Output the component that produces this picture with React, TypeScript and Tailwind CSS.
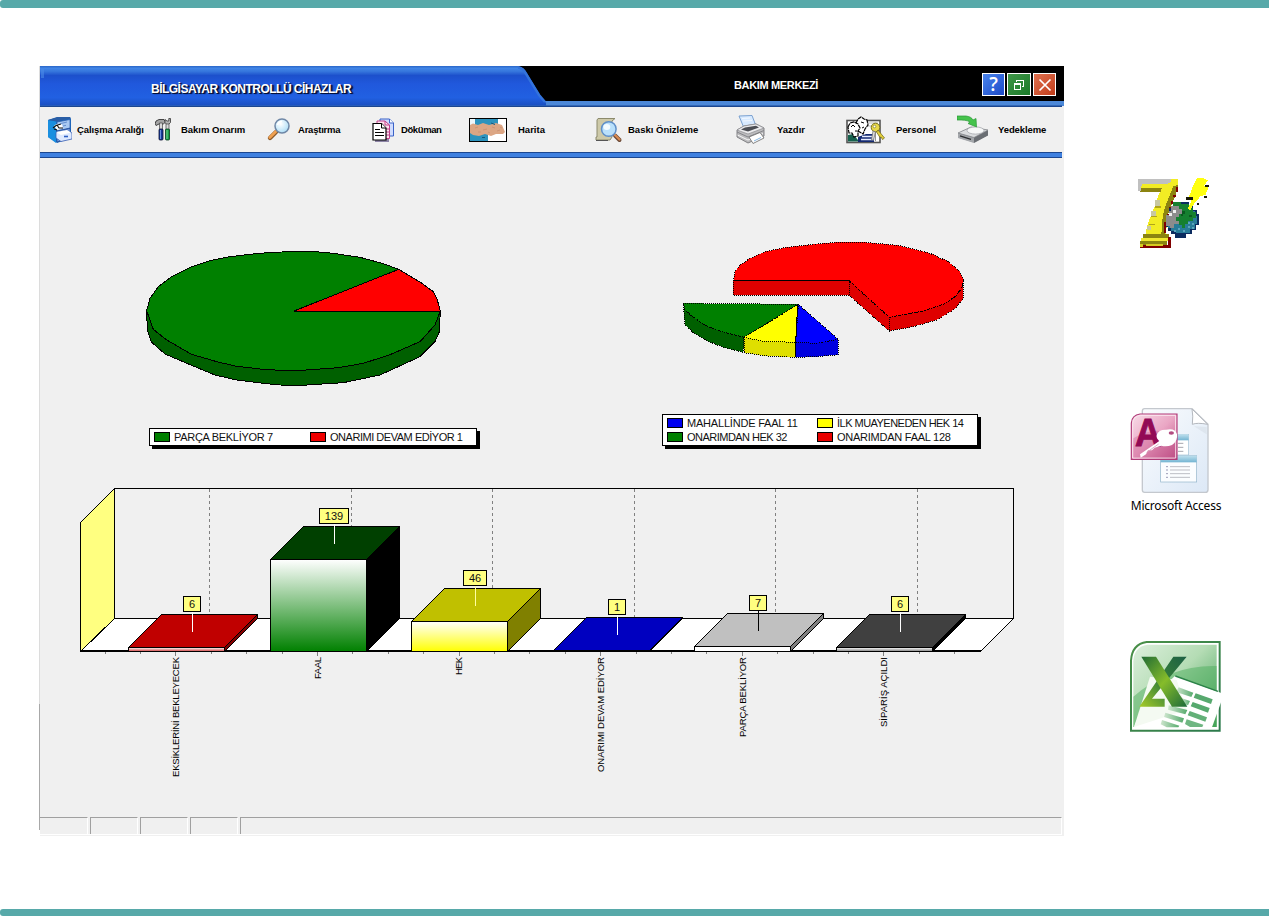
import React from "react";

const UI_FONT = "font-['Liberation_Sans',Arial,sans-serif]";

/* ---------- toolbar icons ---------- */

const CabinetIcon = () => (
  <svg className="block h-7 w-6" viewBox="0 0 24 28">
    <path d="M0 4 L9 1.5 H22 L23 3 V22 L9 27 L0 21 Z" fill="#1c6ec4" />
    <path d="M0 4 L8 5.500 V27 L0 21 Z" fill="#1a8fe0" />
    <path d="M0 4 L9 1 H22 L23 2.500 L9 5.500 Z" fill="#2a5ea6" />
    <path d="M9 6 L22 3.500 V12 L9 15 Z" fill="#a9c9f2" stroke="#2456a6" strokeWidth=".7" />
    <path d="M13 7.500 L19 6 M15 10 L18 9.300" stroke="#5b86c8" strokeWidth=".9" />
    <path d="M9 15 L22 12.500 V22 L9 26 Z" fill="#7fa9e6" stroke="#1d3f8c" strokeWidth=".7" />
    <path d="M8 16.500 L19 14 L24 17 V23 L13 25.500 L8 22 Z" fill="#dfeaff" stroke="#3a5fb4" strokeWidth=".8" />
    <path d="M8 16 L19 14 L23 16.500 L13 19 Z" fill="#fff" />
    <path d="M6 10 C8 8 11 7 14 8.500 L15 12 L9 14 Z" fill="#fff" />
    <path d="M5 12 L8 9.500 L13 8 M9 9 L11 12 L15 12 M6 13 L9 14" fill="none" stroke="#111" strokeWidth="1.100" />
    <path d="M16 20.500 H20" stroke="#2d5fc4" strokeWidth="1.600" />
  </svg>
);

const ToolsIcon = () => (
  <svg className="block h-6 w-[17px]" viewBox="0 0 17 24">
    <path d="M0 6 L1 3 L4 1.500 H9 L10.500 4 L8 6.500 L5 5.500 L1 7.500 Z" fill="#a4a4a4" stroke="#222" strokeWidth=".8" />
    <path d="M10 1.500 L10 4.500 L11.500 6.500 H13.500 L15.500 4.500 V.5 L13.800 .5 V3 H12 Z" fill="#b4b4b4" stroke="#333" strokeWidth=".8" />
    <path d="M4.500 5 H7.500 V13 H4.500 Z M11 6 H14 V13 H11 Z" fill="#d8d8d8" stroke="#444" strokeWidth=".7" />
    <rect x="4" y="11" width="4" height="11" rx="1" fill="#173a9a" stroke="#0a0f30" strokeWidth=".8" />
    <rect x="10.500" y="11" width="4" height="11" rx="1" fill="#159a45" stroke="#05381a" strokeWidth=".8" />
    <path d="M5.500 12 V21" stroke="#7fa5ea" strokeWidth=".8" />
    <path d="M12 12 V21" stroke="#8ce6a8" strokeWidth=".8" />
  </svg>
);

const SearchIcon = () => (
  <svg className="block h-6 w-6" viewBox="0 0 24 24">
    <defs>
      <radialGradient id="lensA" cx=".4" cy=".35" r=".7">
        <stop offset="0" stopColor="#ffffff" />
        <stop offset="1" stopColor="#a9dcf6" />
      </radialGradient>
    </defs>
    <path d="M10 14 L4 20" stroke="#8a5a2a" strokeWidth="4.400" strokeLinecap="round" />
    <path d="M9.800 13.600 L3.800 19.600" stroke="#f0a050" strokeWidth="2.800" strokeLinecap="round" />
    <circle cx="16" cy="8" r="7" fill="url(#lensA)" stroke="#6f87a6" strokeWidth="1.500" />
    <path d="M11.500 7 A5 5 0 0 1 16 3.500" fill="none" stroke="#fff" strokeWidth="1.500" />
  </svg>
);

const DocsIcon = () => (
  <svg className="block h-6 w-[22px]" viewBox="0 0 22 24">
    <path d="M3 21 H17 V24 H3 Z" fill="#8d84a6" />
    <path d="M8 1 H17.500 L21.500 5 V18 H8 Z" fill="#cfdcff" stroke="#3b62c8" />
    <path d="M17.500 1 V5 H21.500" fill="#fff" stroke="#3b62c8" />
    <path d="M5 3 H13 L17.500 7 V20.500 H5 Z" fill="#ffe1ee" stroke="#c0408a" />
    <path d="M13 3 V7 H17.500 M14 11 H17 M14 14 H17 M14 17 H17" fill="none" stroke="#c0408a" />
    <path d="M1 5.500 H9.500 L14 10 V22 H1 Z" fill="#fff" stroke="#000" strokeWidth="1.200" />
    <path d="M9.500 5.500 V10 H14" fill="#fff" stroke="#000" />
    <path d="M3 11.500 H8 M3 14.500 H12 M3 17.500 H12" stroke="#000" />
  </svg>
);

const MapIcon = () => (
  <svg className="block h-6 w-[38px]" viewBox="0 0 38 24">
    <rect x=".5" y=".5" width="37" height="23" fill="#fff" />
    <path d="M5 1 H29 V12 H19 V23 H1 V14 Z" fill="#2d93bd" />
    <path d="M1 1 H6 V7 H1 Z" fill="#eef6fa" />
    <path d="M1 7 L4 5.500 L9 7 L14 5 L20 7 L27 5 L33 7 L36 14 L34 16 L27 16 L22 18 L16 16 L10 18 L4 17 L1 15 Z" fill="#dca684" />
    <path d="M6 10 L9 9 M14 12 L18 11 M23 9 L26 10 M28 13 L31 12 M9 14 L12 14 M19 14 L21 15 M31 9 L33 10" stroke="#cc9474" />
    <path d="M22 5 L26 6.500 M13 19.500 H16" stroke="#145a80" />
    <rect x=".5" y=".5" width="37" height="23" fill="none" stroke="#000" />
  </svg>
);

const PreviewIcon = () => (
  <svg className="block h-[26px] w-7" viewBox="0 0 28 26">
    <path d="M3 1.500 H20 L17 4 V20 L15 23 H1 V20 H2 V3 Z" fill="#cdc9a8" stroke="#8c8a6c" />
    <path d="M1 23.500 H13" stroke="#555" />
    <path d="M20 18.500 L24.500 23" stroke="#6b4a38" strokeWidth="4" strokeLinecap="round" />
    <path d="M19.500 17.500 L24.500 22.500" stroke="#d98a50" strokeWidth="2.200" strokeLinecap="round" />
    <circle cx="13.800" cy="12" r="7.300" fill="#b9e0fb" stroke="#5f8fc8" strokeWidth="1.500" />
    <ellipse cx="11.800" cy="10" rx="3.500" ry="3" fill="#f2fbff" />
  </svg>
);

const PrinterIcon = () => (
  <svg className="block h-[30px] w-[30px]" viewBox="0 0 30 30">
    <path d="M3 1 L16 0.500 L20 11 L8 13 Z" fill="#d8eaff" stroke="#6f98cc" strokeWidth=".9" />
    <path d="M6 3.500 L14 3 M7 6 L16 5.500" stroke="#f2f8ff" />
    <path d="M1 15 L8 11 L20 9 L28 13 V21 L12 28 L1 22 Z" fill="#bcbcbe" stroke="#77777b" strokeWidth=".9" />
    <path d="M1 15 L8 11 L20 9 L28 13 L12 19 Z" fill="#ececee" stroke="#8c8c90" strokeWidth=".7" />
    <path d="M5 14.500 L9 12.500 L20 10.800 L23 12.500 L12 16.500 Z" fill="#4c4e54" />
    <path d="M1 17 L12 22 L28 15.500" fill="none" stroke="#85858a" />
    <path d="M1.500 20 L12 25 L27 18.500" fill="none" stroke="#f5f5f5" />
    <path d="M13 22 L24 17.500 L28 23 L17 28.500 Z" fill="#fff" stroke="#777" strokeWidth=".9" />
    <path d="M18 26 L25 22.500" stroke="#88b8e4" />
  </svg>
);

const PersonnelIcon = () => (
  <svg className="block h-7 w-10" viewBox="0 0 40 28">
    <rect x="1" y="4.500" width="33" height="22" fill="#fff" stroke="#555" strokeWidth="1.600" />
    <path d="M20 7 H32 M22 10 H32" stroke="#bbb" />
    <path d="M2 25.500 V19 L7 18 L12 24 L14 20 L22 25.500 Z" fill="#16614d" />
    <path d="M12 21 L20 18 H28 V26 H12 Z" fill="#142a72" />
    <path d="M16 20.500 H29 M15 23.500 H29" stroke="#e7edff" strokeWidth="1.300" />
    <path d="M10 7 L12 3 L15 1 L18 3 L21 4 L22 9 L19 13 L17 18 L12 15 L10 12 Z" fill="#fff" stroke="#000" strokeWidth="1.200" strokeDasharray="4 .6" />
    <path d="M2 11 L4 7 L8 6 L12 8 L14 12 L12 15 L12 20 L8 21 L6 17 L3 17 Z" fill="#fff" stroke="#000" strokeWidth="1.200" strokeDasharray="4 .6" />
    <path d="M5 11 L7 9 L9 11 M15 6 L18 7 M9 15 L11 15 M16 12 L18 11" fill="none" stroke="#000" />
    <circle cx="29.500" cy="11.500" r="4.300" fill="#e8d84a" stroke="#77701e" />
    <circle cx="28.500" cy="10.500" r="1.300" fill="#fff" stroke="#77701e" strokeWidth=".6" />
    <path d="M32 14 L38.500 22 L36.500 23.500 L35 21 L34 21.500 L30.500 16 Z" fill="#e3cf3a" stroke="#77701e" strokeWidth=".8" />
    <path d="M27 15 L25.500 24 H27.500 L29.500 16 Z M29.500 16 V25" fill="#ddd" stroke="#777" strokeWidth=".8" />
  </svg>
);

const BackupIcon = () => (
  <svg className="block h-[30px] w-8" viewBox="0 0 32 30">
    <path d="M1 18 L14 12 L31 15 V20 L17 27.500 L1 22.500 Z" fill="#777b80" />
    <path d="M1 18 L14 12 L31 15 L17 22.500 Z" fill="#dadcde" stroke="#8a8d91" strokeWidth=".8" />
    <ellipse cx="18.500" cy="15.500" rx="8.500" ry="3.600" fill="#f6f7f7" stroke="#a7aaae" strokeWidth=".8" />
    <path d="M1 18.500 L17 23 V28 L1 23 Z" fill="#a4a7ab" />
    <path d="M3 20.800 L14 24.300" stroke="#2b2d30" strokeWidth="1.300" />
    <path d="M17 23 L31 15.500 V20.500 L17 28 Z" fill="#6a6e73" />
    <path d="M0 1 H9 C13 1.500 15 3 16 5 L19 3.500 L19.500 12 L11 8.500 L13 7 C10 5 6 5 0 5 Z" fill="#45c34c" stroke="#2a9636" strokeWidth=".7" />
  </svg>
);

type Tool = { label: string; width: string; iconBox: string; tracking: string; icon: React.ReactNode };

const tools: Tool[] = [
  { label: "Çalışma Aralığı", width: "w-[107px]", iconBox: "w-[29px]", tracking: "tracking-[-0.1px]", icon: <CabinetIcon /> },
  { label: "Bakım Onarım", width: "w-[111px]", iconBox: "w-[26px]", tracking: "tracking-[-0.02px]", icon: <ToolsIcon /> },
  { label: "Araştırma", width: "w-[106px]", iconBox: "w-[32px]", tracking: "tracking-[-0.22px]", icon: <SearchIcon /> },
  { label: "Döküman", width: "w-[97px]", iconBox: "w-[29px]", tracking: "tracking-[-0.4px]", icon: <DocsIcon /> },
  { label: "Harita", width: "w-[126px]", iconBox: "w-[49px]", tracking: "tracking-[0px]", icon: <MapIcon /> },
  { label: "Baskı Önizleme", width: "w-[141px]", iconBox: "w-[33px]", tracking: "tracking-[0px]", icon: <PreviewIcon /> },
  { label: "Yazdır", width: "w-[110px]", iconBox: "w-[41px]", tracking: "tracking-[0px]", icon: <PrinterIcon /> },
  { label: "Personel", width: "w-[111px]", iconBox: "w-[50px]", tracking: "tracking-[0px]", icon: <PersonnelIcon /> },
  { label: "Yedekleme", width: "w-[100px]", iconBox: "w-[41px]", tracking: "tracking-[-0.1px]", icon: <BackupIcon /> },
];

/* ---------- header ---------- */

const HeaderShape = () => (
  <svg className="absolute inset-0 h-[41px] w-[1024px]" viewBox="0 0 1024 41">
    <defs>
      <linearGradient id="tab" x1="0" y1="0" x2="0" y2="1">
        <stop offset="0" stopColor="#2a66c8" />
        <stop offset=".06" stopColor="#4185e6" />
        <stop offset=".14" stopColor="#3575dc" />
        <stop offset=".24" stopColor="#1c50cc" />
        <stop offset=".45" stopColor="#2058dc" />
        <stop offset=".8" stopColor="#2160e2" />
        <stop offset="1" stopColor="#1a4fc0" />
      </linearGradient>
    </defs>
    <rect width="1024" height="36" fill="#000" />
    <rect y="35" width="1024" height="5" fill="#4c88d8" />
    <rect y="39.500" width="1022" height="1.500" fill="#1b4690" />
    <path d="M0 0 H478 Q484 1 487 7 L500 29 L506 37 V39.500 H0 Z" fill="url(#tab)" />
    <path d="M478 1.500 Q483 2 486 8 L499 29 L505 36" fill="none" stroke="#3373dc" strokeWidth="2.500" />
    <path d="M2.500 12 V3" stroke="#4a8ae8" strokeWidth="3" opacity=".6" />
  </svg>
);

const Header = () => (
  <header className="relative h-[41px] w-[1024px]">
    <HeaderShape />
    <div className="relative flex h-full">
      <h1 className="w-[505px] pl-[111px] pt-[14px] text-[12px] font-bold leading-[18px] tracking-[-0.52px] whitespace-nowrap text-white [text-shadow:1px_1px_0_#04103a,2px_1px_1px_#04103a]">
        BİLGİSAYAR KONTROLLÜ CİHAZLAR
      </h1>
      <h2 className="w-[437px] pl-[189px] pt-[11px] text-[11px] font-bold leading-4 tracking-[-0.35px] whitespace-nowrap text-white">
        BAKIM MERKEZİ
      </h2>
      <div className="flex gap-[2px] pt-[7px]">
        <button className="flex h-[23px] w-[23px] items-center justify-center border border-white bg-linear-to-br from-[#4a84ec] to-[#1d48c8] text-[19px] leading-none font-semibold text-white font-['Open_Sans',sans-serif]">
          ?
        </button>
        <button className="flex h-[23px] w-[24px] items-center justify-center border border-white bg-linear-to-br from-[#3f9648] to-[#197a28]">
          <svg className="h-3 w-3" viewBox="0 0 12 12" fill="none" stroke="#fff" shapeRendering="crispEdges">
            <path d="M3.500 3 V1.500 H10.500 V7.500 H9" />
            <path d="M1.500 4.500 H7.500 V10.500 H1.500 Z M1 5.500 H8" />
          </svg>
        </button>
        <button className="flex h-[23px] w-[23px] items-center justify-center border border-white bg-linear-to-br from-[#e0704e] to-[#c03c18]">
          <svg className="h-[14px] w-[14px]" viewBox="0 0 14 14" stroke="#fff" strokeWidth="1.700">
            <path d="M1.500 1.500 L12.500 12.500 M12.500 1.500 L1.500 12.500" />
          </svg>
        </button>
      </div>
    </div>
  </header>
);

const Toolbar = () => (
  <nav className="h-[51px] w-[1022px]">
    <div className="flex h-[45px] pl-2">
      {tools.map((t) => (
        <div key={t.label} className={`flex shrink-0 items-center ${t.width}`}>
          <div className={`shrink-0 ${t.iconBox}`}>{t.icon}</div>
          <span className={`text-[9.5px] font-bold leading-3 whitespace-nowrap text-black ${t.tracking}`}>{t.label}</span>
        </div>
      ))}
    </div>
    <div className="h-[6px] border-t border-b border-[#1b4690] bg-[#3f80e0]" />
  </nav>
);

/* ---------- pies ---------- */

const FirstPie = () => (
  <svg
    className="ml-[90px] block h-[160px] w-[360px]"
    viewBox="0 0 1080 480"
    shapeRendering="crispEdges"
    stroke="#000"
    strokeWidth="3"
  >
    <polygon
      fill="#006000"
      points="50,212 52,270 64,306 105,342 180,374 255,405 320,420 400,430 450,435 515,436 640,428 750,405 870,350 915,305 928,275 931,213"
    />
    <polygon
      fill="#008000"
      points="50,212 60,175 85,140 125,110 185,80 240,62 300,50 385,40 455,36 545,34 610,40 690,52 760,71 806,88 870,126 910,155 922,180 931,213 915,255 870,305 780,344 700,370 625,383 515,391 450,391 400,388 320,379 260,365 185,343 110,300 70,268"
    />
    <polygon fill="#ff0000" points="492,213 806,88 870,126 910,155 922,180 931,213" />
  </svg>
);

const SecondPie = () => (
  <svg
    className="ml-[10px] block h-[165px] w-[350px]"
    viewBox="0 0 1050 495"
    shapeRendering="crispEdges"
    stroke="#000"
    strokeWidth="3"
    strokeDasharray="3 3"
  >
    <polygon
      fill="#df0000"
      points="718,262 770,252 820,243 880,223 915,200 935,175 940,150 940,205 915,237 860,270 790,290 718,303"
    />
    <polygon
      fill="#ff0000"
      points="250,152 255,125 270,105 300,85 345,65 410,52 500,42 560,37 645,37 750,47 840,70 895,95 930,125 940,150 935,175 915,200 880,223 820,243 770,252 718,262 597,152"
    />
    <polygon fill="#df0000" points="250,152 597,152 597,196 250,196" />
    <polygon fill="#df0000" points="597,152 718,262 718,303 597,196" />
    <polyline fill="none" strokeDasharray="none" points="250,152 597,152" />
    <polygon fill="#006000" points="100,220 105,240 130,262 170,288 215,305 282,322 280,367 220,352 170,332 130,308 105,285" />
    <polygon fill="#008000" points="100,220 445,223 282,322 215,305 170,288 130,262 105,240" />
    <polygon fill="#dfdf00" points="282,322 340,334 437,337 437,382 350,378 282,368" />
    <polygon fill="#ffff00" points="445,223 282,322 340,334 437,337" />
    <polygon fill="#0000df" points="437,337 500,340 565,328 565,374 500,380 437,382" />
    <polygon fill="#0000ff" points="445,223 437,337 500,340 565,328" />
    <polyline fill="none" strokeDasharray="none" points="443,226 437,337 437,382" />
  </svg>
);

const LegendEntry = ({
  color,
  width,
  tracking,
  children,
}: {
  color: string;
  width: string;
  tracking: string;
  children: React.ReactNode;
}) => (
  <div className={`flex items-center ${width}`}>
    <span className={`mr-1 h-[10px] w-4 shrink-0 border border-black ${color}`} />
    <span className={`text-[11px] leading-[14px] whitespace-nowrap text-[#111] ${tracking}`}>{children}</span>
  </div>
);

/* ---------- bar chart ---------- */

type Bar = {
  x: number;
  top: number;
  value: number;
  label: string;
  length: number;
  topFill: string;
  sideFill: string;
  frontFill: string;
  leader: string;
  boxW: number;
};

const bars: Bar[] = [
  { x: 128.5, top: 647.5, value: 6, label: "EKSİKLERİNİ BEKLEYECEK", length: 120, topFill: "#c00000", sideFill: "#800000", frontFill: "url(#redFront)", leader: "#fff", boxW: 17 },
  { x: 270.5, top: 559.5, value: 139, label: "FAAL", length: 22, topFill: "#004000", sideFill: "#000", frontFill: "url(#greenFront)", leader: "#fff", boxW: 29 },
  { x: 411.5, top: 621.5, value: 46, label: "HEK", length: 18, topFill: "#c0c000", sideFill: "#808000", frontFill: "url(#yellowFront)", leader: "#ffffa0", boxW: 23 },
  { x: 553.5, top: 650.5, value: 1, label: "ONARIMI DEVAM EDİYOR", length: 115, topFill: "#0000c0", sideFill: "#000080", frontFill: "#0000c0", leader: "#fff", boxW: 17 },
  { x: 694.5, top: 646.5, value: 7, label: "PARÇA BEKLİYOR", length: 80, topFill: "#c0c0c0", sideFill: "#808080", frontFill: "#fff", leader: "#000", boxW: 17 },
  { x: 836.5, top: 647.5, value: 6, label: "SİPARİŞ AÇILDI", length: 70, topFill: "#404040", sideFill: "#000", frontFill: "url(#grayFront)", leader: "#fff", boxW: 17 },
];

const VGradient = ({ id, to }: { id: string; to: string }) => (
  <linearGradient id={id} x1="0" y1="0" x2="0" y2="1">
    <stop offset="0" stopColor="#fff" />
    <stop offset="1" stopColor={to} />
  </linearGradient>
);

const BarChart = () => (
  <svg className="mt-[22px] ml-[30px] block h-[310px] w-[960px]" viewBox="70 480 960 310">
    <defs>
      <VGradient id="redFront" to="#d04040" />
      <VGradient id="greenFront" to="#008000" />
      <VGradient id="yellowFront" to="#ffff00" />
      <VGradient id="grayFront" to="#808080" />
    </defs>
    <g shapeRendering="crispEdges" stroke="#000">
      <rect x="114.500" y="488.500" width="899" height="130" fill="none" />
      {[209.5, 351.5, 492.5, 634.5, 775.5, 917.5].map((x) => (
        <line key={x} x1={x} x2={x} y1="489" y2="618" stroke="#808080" strokeDasharray="3 3" />
      ))}
      <polygon points="114.500,618.500 1013.500,618.500 980.500,651.500 80.500,651.500" fill="#fff" />
      <polygon points="80.500,522.500 114.500,488.500 114.500,618.500 80.500,651.500" fill="#ffff80" />
      <rect x="80" y="650" width="901" height="2" fill="#000" stroke="none" />
      {Array.from({ length: 25 }, (_, i) => {
        const x = Math.floor(105 + i * 35.4) + 0.5;
        return <line key={i} x1={x} x2={x} y1="652" y2={i % 4 === 2 ? 656 : 654} stroke="#808080" />;
      })}
      {bars.map((b) => {
        const r = b.x + 96;
        const t = b.top;
        const cx = b.x + 64;
        return (
          <g key={b.label}>
            <polygon points={`${b.x},${t} ${b.x + 33},${t - 33} ${r + 33},${t - 33} ${r},${t}`} fill={b.topFill} />
            <polygon points={`${r},${t} ${r + 33},${t - 33} ${r + 33},618.500 ${r},651.500`} fill={b.sideFill} />
            {t < 650 && <rect x={b.x} y={t} width="96" height={651.5 - t} fill={b.frontFill} />}
            <line x1={cx} x2={cx} y1={t - 36} y2={t - 15.5} stroke={b.leader} />
            <rect x={Math.floor(cx - b.boxW / 2) - 0.5} y={t - 51} width={b.boxW} height="15" fill="#ffff80" />
          </g>
        );
      })}
    </g>
    <g fontFamily="'Liberation Sans', Arial, sans-serif" fill="#111">
      {bars.map((b, i) => {
        const baseX = 179 + i * 141.65;
        const baseY = 657 + b.length;
        return (
          <g key={b.label}>
            <text x={b.x + 63.5} y={b.top - 39.5} fontSize="11" textAnchor="middle">
              {b.value}
            </text>
            <text
              x={baseX}
              y={baseY}
              fontSize="9.500"
              fill="#000"
              textLength={b.length}
              transform={`rotate(-90 ${baseX} ${baseY})`}
            >
              {b.label}
            </text>
          </g>
        );
      })}
    </g>
  </svg>
);

const StatusBar = () => (
  <footer className="mt-[27px] flex h-[18px] w-[1022px] gap-[2px] border-b border-white">
    <div className="w-12 border-t border-r border-t-[#a0a0a0] border-r-white" />
    {[1, 2, 3].map((n) => (
      <div key={n} className="w-12 border-t border-r border-l border-t-[#a0a0a0] border-r-white border-l-[#a0a0a0]" />
    ))}
    <div className="flex-1 border-t border-r border-l border-t-[#a0a0a0] border-r-white border-l-[#a0a0a0]" />
  </footer>
);

/* ---------- desktop icons ---------- */

const SevenGlobe = () => (
  <svg className="block h-[100px] w-[130px]" viewBox="0 0 390 300" shapeRendering="crispEdges">
    <path d="M174 42 H204 V60 L198 82 L190 104 L180 132 L172 156 L168 210 H106 L112 180 L122 154 L134 124 L142 100 L152 74 H90 V54 H174 Z" fill="#f2ec24" />
    <path d="M84 42 H182 V50 L174 56 H96 L92 78 H84 Z" fill="#c0c0c0" />
    <path d="M94 68 H156 L152 82 H90 Z" fill="#8c8410" />
    <path d="M204 60 L198 88 L188 110 L178 136 L170 160 L166 210 H154 L156 170 L162 136 L172 108 L182 84 L190 64 Z" fill="#8c8410" />
    <path d="M204 66 V82 H198 V96 H190 V118 H182 V140 H176 V162 H170 V146 H176 V126 H182 V108 H190 V90 H198 V66 Z" fill="#800000" />
    <path d="M136 104 H150 V124 H136 Z M124 138 H138 V152 H124 Z M112 184 H124 V196 H112 Z" fill="#c8c8a0" />
    <path d="M136 124 H152 V129 H136 Z M124 152 H142 V157 H124 Z M118 176 H134 V181 H118 Z" fill="#b0a418" />
    <path d="M98 208 H176 V218 H98 Z" fill="#8c8410" />
    <path d="M94 218 H176 V228 H94 Z" fill="#f0e830" />
    <path d="M90 228 H172 V240 H90 Z" fill="#8c8410" />
    <path d="M90 240 H182 V250 H90 Z" fill="#800000" />
    <path d="M90 236 H100 V246 H90 Z M108 236 H158 V243 H108 Z" fill="#d8ca20" />
    <path d="M162 170 H168 V204 H162 Z M174 216 H182 V244 H174 Z" fill="#800000" />
    <path d="M188 112 H236 V122 H250 V134 H260 V148 H266 V180 H258 V196 H246 V208 H228 V218 H196 V208 H182 V198 H174 V186 H168 V150 H176 V130 H188 Z" fill="#0c2c60" />
    <path d="M188 116 H232 V126 H246 V138 H256 V152 H262 V178 H254 V192 H240 V204 H198 V198 H184 V188 H174 V154 H182 V132 H188 Z" fill="#287c98" />
    <path d="M178 138 H184 V124 H212 V132 H222 V146 H210 V160 H206 V178 H192 V190 H180 V184 H168 V150 H178 Z" fill="#8c8c8c" />
    <path d="M188 110 H212 V116 H236 V130 H250 V140 H258 V158 H248 V168 H234 V178 H226 V188 H216 V180 H206 V168 H198 V156 H208 V146 H216 V132 H206 V122 H188 Z" fill="#158030" />
    <path d="M216 138 H226 V146 H220 V152 H212 V146 H216 Z M236 150 H246 V156 H236 Z" fill="#0a5a20" />
    <path d="M234 184 H240 V190 H234 Z M246 174 H252 V180 H246 Z M204 190 H210 V196 H204 Z M218 194 H224 V200 H218 Z M192 194 H198 V200 H192 Z M234 172 H240 V178 H234 Z M246 186 H252 V192 H246 Z" fill="#5aa4bc" />
    <path d="M178 144 H186 V152 H178 Z M190 136 H198 V144 H190 Z" fill="#f0f0f0" />
    <path d="M262 38 L282 40 L294 46 L282 62 L298 60 L286 90 L270 94 L262 106 L254 114 L240 136 L234 130 L244 108 L234 98 L242 84 L248 64 Z" fill="#ffff10" />
    <path d="M228 96 H250 V104 H228 Z M284 60 H296 V66 H284 Z M282 92 H290 V98 H282 Z M260 114 H266 V120 H260 Z" fill="#181808" />
  </svg>
);

const AccessIcon = () => (
  <svg className="block h-[104px] w-[130px]" viewBox="0 0 390 312">
    <defs>
      <linearGradient id="page" x1="0" y1="0" x2="1" y2="1">
        <stop offset="0" stopColor="#fafcfe" />
        <stop offset="1" stopColor="#dce8f6" />
      </linearGradient>
      <linearGradient id="pink" x1="0" y1="0" x2="1" y2="1">
        <stop offset="0" stopColor="#f8dce8" />
        <stop offset=".5" stopColor="#eaa6c4" />
        <stop offset="1" stopColor="#b8477f" />
      </linearGradient>
      <linearGradient id="winHead" x1="0" y1="0" x2="0" y2="1">
        <stop offset="0" stopColor="#bfe0ee" />
        <stop offset="1" stopColor="#73b4d2" />
      </linearGradient>
    </defs>
    <path d="M104 41 H246 L294 88 V284 Q294 292 286 292 H104 Q97 292 97 285 V48 Q97 41 104 41 Z" fill="url(#page)" stroke="#c4c8ce" strokeWidth="4" />
    <path d="M246 42 L293 88 Q262 82 247 88 Q250 62 246 42 Z" fill="#fff" stroke="#b4b8be" strokeWidth="3" />
    <path d="M252 94 L290 96 V118 Z" fill="#d4dbe4" opacity=".5" />
    <rect x="170" y="118" width="66" height="62" fill="#fff" stroke="#9ebfd4" strokeWidth="2" />
    <rect x="170" y="118" width="66" height="18" fill="url(#winHead)" />
    <path d="M204 145 H220 M204 157 H220 M204 169 H220" stroke="#a6a6ae" strokeWidth="3" />
    <rect x="152" y="182" width="108" height="79" fill="#fbfdff" stroke="#90b3ca" strokeWidth="2" />
    <rect x="152" y="182" width="108" height="20" fill="url(#winHead)" />
    <path d="M168 215 H174 M168 225 H174 M168 236 H174 M168 247 H174" stroke="#88a" strokeWidth="2.500" />
    <path d="M180 215 H240 M180 225 H240 M180 236 H240 M180 247 H240" stroke="#aeb0b8" strokeWidth="2.500" />
    <path d="M90 57 H201 V193 H64 V84 Q66 60 90 57 Z" fill="url(#pink)" stroke="#b03a78" strokeWidth="3.500" />
    <path d="M92 61 H197 V189 H68 V85 Q70 64 92 61 Z" fill="none" stroke="#fbe6ef" strokeWidth="3" />
    <path d="M70 130 Q130 92 196 118 V188 H70 Z" fill="#c85a90" opacity=".35" />
    <text x="75" y="154" fontFamily="'Liberation Sans', Arial, sans-serif" fontWeight="700" fontSize="118" textLength="78" lengthAdjust="spacingAndGlyphs" fill="#920a55" stroke="#920a55" strokeWidth="3">
      A
    </text>
    <path d="M140 120 Q146 103 168 104 Q196 98 201 118 Q204 138 186 150 Q170 156 154 152 L134 158 L126 166 L114 166 L108 178 L92 188 L90 178 L148 138 Q138 130 140 120 Z" fill="#fff" />
    <ellipse cx="184" cy="114" rx="8" ry="5" fill="#b24a80" />
    <path d="M110 172 L146 147" stroke="#d6a4be" strokeWidth="2.500" />
  </svg>
);

const ExcelIcon = () => (
  <svg className="block h-[120px] w-[130px]" viewBox="0 0 390 360">
    <defs>
      <linearGradient id="xlBg" x1="0" y1="0" x2="1" y2="1">
        <stop offset="0" stopColor="#dcefdc" />
        <stop offset=".45" stopColor="#b4dcb4" />
        <stop offset="1" stopColor="#3a9a50" />
      </linearGradient>
      <linearGradient id="xlEdge" x1="0" y1="0" x2="1" y2="1">
        <stop offset="0" stopColor="#4a9048" />
        <stop offset="1" stopColor="#2c7a4c" />
      </linearGradient>
      <linearGradient id="xlStroke" x1="0" y1="0" x2="1" y2="1">
        <stop offset="0" stopColor="#1f6a34" />
        <stop offset=".5" stopColor="#86bc2a" />
        <stop offset="1" stopColor="#1c6a3a" />
      </linearGradient>
      <linearGradient id="xlBack" x1="0" y1="1" x2="1" y2="0">
        <stop offset="0" stopColor="#a6cc28" />
        <stop offset=".45" stopColor="#3a8438" />
        <stop offset="1" stopColor="#1d6044" />
      </linearGradient>
      <linearGradient id="cell" x1="0" y1="0" x2="1" y2="0">
        <stop offset="0" stopColor="#cfe6cf" />
        <stop offset="1" stopColor="#55aa6c" />
      </linearGradient>
    </defs>
    <path d="M110 36 H329 V302 H63 V92 Q66 42 110 36 Z" fill="#fff" stroke="url(#xlEdge)" strokeWidth="6" />
    <path d="M112 44 H320 V291 H70 V94 Q72 50 112 44 Z" fill="url(#xlBg)" />
    <path d="M70 200 Q180 104 320 108 V291 H70 Z" fill="#4eae5e" opacity=".5" />
    <path d="M195 138 L342 192 L306 292 H72 L98 226 Z" fill="#fff" />
    <path d="M72 291 L120 140 L200 150 L230 240 Z" fill="#f4faf2" />
    <path d="M196 138 L324 184" stroke="#2c8248" strokeWidth="4" />
    <g>
      <path d="M206 172 L250 188 L244 201 L198 186 Z" fill="url(#cell)" />
      <path d="M257 190 L308 208 L303 222 L251 203 Z" fill="#57a96e" />
      <path d="M214 204 L240 213 L234 226 L220 221 Z" fill="url(#cell)" />
      <path d="M248 216 L299 234 L294 248 L242 229 Z" fill="#57a96e" />
      <path d="M176 226 L232 240 L226 253 L174 239 Z" fill="url(#cell)" />
      <path d="M239 243 L291 262 L286 275 L233 256 Z" fill="#63b078" />
      <path d="M166 248 L222 265 L217 278 L162 261 Z" fill="url(#cell)" />
      <path d="M230 268 L280 284 L277 291 L240 291 L225 282 Z" fill="#6fb682" />
      <path d="M156 270 L208 287 L205 292 H170 L152 283 Z" fill="url(#cell)" />
    </g>
    <path d="M190 80 H230 L126 206 H164 V230 H88 Z" fill="url(#xlBack)" />
    <path d="M94 80 H138 L232 230 H186 Z" fill="url(#xlStroke)" />
  </svg>
);

export default function App() {
  return (
    <div className={`flex h-[916px] w-[1269px] flex-col overflow-hidden bg-white ${UI_FONT}`}>
      <div className="h-2 shrink-0 rounded-l-[3px] bg-[#57a9a9]" />
      <div className="flex flex-1 items-start">
        <main className="mt-[58px] ml-[39px] flex h-[770px] w-[1025px] shrink-0">
          <div className="flex w-px shrink-0 flex-col">
            <div className="h-[638px] bg-[#dcdcdc]" />
            <div className="h-[126px] bg-[#a8a8a8]" />
          </div>
          <div className="h-[770px] w-[1024px] bg-[#f0f0f0]">
            <Header />
            <Toolbar />
            <div className="flex h-[300px]">
              <section className="w-[600px] pt-[82px]">
                <FirstPie />
                <div className="mt-[28px] ml-[109px] flex h-[18px] w-[328px] items-center border border-black bg-white pl-1 shadow-[3px_3px_0_#000]">
                  <LegendEntry color="bg-[#008000]" width="w-[156px]" tracking="tracking-[-0.3px]">PARÇA BEKLİYOR 7</LegendEntry>
                  <LegendEntry color="bg-[#f00000]" width="w-[160px]" tracking="tracking-[-0.47px]">ONARIMI DEVAM EDİYOR 1</LegendEntry>
                </div>
              </section>
              <section className="w-[424px] pt-[72px]">
                <SecondPie />
                <div className="mt-[19px] ml-[22px] grid h-[32px] w-[316px] grid-cols-[150px_150px] content-center border border-black bg-white pl-1 shadow-[3px_3px_0_#000]">
                  <LegendEntry color="bg-[#0000f0]" width="w-[150px]" tracking="tracking-[-0.2px]">MAHALLİNDE FAAL 11</LegendEntry>
                  <LegendEntry color="bg-[#ffff00]" width="w-[150px]" tracking="tracking-[-0.52px]">İLK MUAYENEDEN HEK 14</LegendEntry>
                  <LegendEntry color="bg-[#008000]" width="w-[150px]" tracking="tracking-[-0.52px]">ONARIMDAN HEK 32</LegendEntry>
                  <LegendEntry color="bg-[#e80000]" width="w-[150px]" tracking="tracking-[-0.25px]">ONARIMDAN FAAL 128</LegendEntry>
                </div>
              </section>
            </div>
            <BarChart />
            <StatusBar />
          </div>
        </main>
        <aside className="ml-[46px] w-[130px] shrink-0 pt-[157px]">
          <SevenGlobe />
          <div className="mt-[130px]">
            <AccessIcon />
            <p className="-mt-px pl-[2px] text-center text-[12px] leading-[16px] whitespace-nowrap text-black font-['Noto_Sans','Open_Sans',sans-serif] tracking-[-0.2px]">
              Microsoft Access
            </p>
          </div>
          <div className="mt-[116px]">
            <ExcelIcon />
          </div>
        </aside>
      </div>
      <div className="h-[7px] shrink-0 rounded-l-[3px] bg-[#57a9a9]" />
    </div>
  );
}
